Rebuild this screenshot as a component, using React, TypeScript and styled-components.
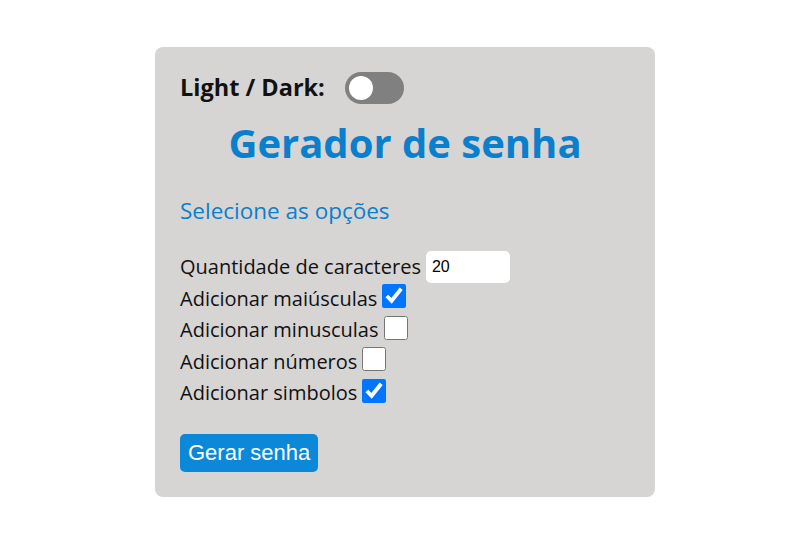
import React, { ChangeEvent, useState } from 'react';
import styled, { createGlobalStyle } from 'styled-components';

const GlobalStyle = createGlobalStyle`
  body {
    margin: 0;
    background-color: #ffffff;
    font-family: 'Open Sans', 'Liberation Sans', sans-serif;
  }
`;

const Page = styled.div`
  display: flex;
  justify-content: center;
  padding: 47px 0 0 9px;
`;

const Card = styled.div`
  width: 500px;
  box-sizing: border-box;
  padding: 25px;
  background-color: #d6d5d4;
  border-radius: 8px;
  color: #111111;
`;

const HeaderRow = styled.div`
  display: flex;
  flex-direction: row;
  align-items: center;
  gap: 20px;
  height: 32px;
`;

const ThemeLabel = styled.span`
  font-size: 23.5px;
  font-weight: 700;
  position: relative;
  top: -1px;
`;

const Switch = styled.button<{ $on: boolean }>`
  position: relative;
  width: 59px;
  height: 32px;
  padding: 0;
  border: none;
  border-radius: 16px;
  background-color: ${(p) => (p.$on ? '#0a88d9' : '#808080')};
  cursor: pointer;

  &::after {
    content: '';
    position: absolute;
    top: 4px;
    left: ${(p) => (p.$on ? '31px' : '4px')};
    width: 24px;
    height: 24px;
    border-radius: 50%;
    background-color: #ffffff;
  }
`;

const Title = styled.h1`
  margin: 12px 0 0;
  text-align: center;
  font-size: 40px;
  font-weight: 700;
  line-height: 53px;
  color: #0a7fcc;
`;

const Subtitle = styled.h2`
  margin: 27px 0 0;
  font-size: 22.5px;
  font-weight: 400;
  line-height: 30px;
  color: #0a7fcc;
`;

const Options = styled.div`
  display: flex;
  flex-direction: column;
  margin-top: 25px;
`;

const OptionRow = styled.label`
  display: flex;
  flex-direction: row;
  align-items: center;
  gap: 5px;
  height: 31.5px;
  font-size: 20px;
`;

const LengthInput = styled.input`
  width: 84px;
  height: 32px;
  box-sizing: border-box;
  padding: 0 6px;
  border: none;
  border-radius: 5px;
  background-color: #ffffff;
  font-family: 'Liberation Sans', Arial, sans-serif;
  font-size: 16px;
  color: #000000;
  outline: none;
`;

const CheckBox = styled.input.attrs({ type: 'checkbox' })`
  width: 24px;
  height: 24px;
  margin: 0;
  accent-color: #0075ff;
  position: relative;
  top: -2px;
`;

const GenerateButton = styled.button`
  margin-top: 25px;
  height: 38px;
  padding: 0 8px;
  border: none;
  border-radius: 5px;
  background-color: #0b88d8;
  color: #ffffff;
  font-family: 'Liberation Sans', Arial, sans-serif;
  font-size: 22px;
  cursor: pointer;
`;

const App: React.FC = () => {
  const [dark, setDark] = useState<boolean>(false);
  const [length, setLength] = useState<string>('20');
  const [upper, setUpper] = useState<boolean>(true);
  const [lower, setLower] = useState<boolean>(false);
  const [numbers, setNumbers] = useState<boolean>(false);
  const [symbols, setSymbols] = useState<boolean>(true);

  const handleLengthChange = (e: ChangeEvent<HTMLInputElement>) => {
    setLength(e.target.value);
  };

  return (
    <>
      <GlobalStyle />
      <Page>
        <Card>
          <HeaderRow>
            <ThemeLabel>Light / Dark:</ThemeLabel>
            <Switch $on={dark} onClick={() => setDark(!dark)} aria-label="Light / Dark" />
          </HeaderRow>
          <Title>Gerador de senha</Title>
          <Subtitle>Selecione as opções</Subtitle>
          <Options>
            <OptionRow>
              Quantidade de caracteres
              <LengthInput value={length} onChange={handleLengthChange} />
            </OptionRow>
            <OptionRow>
              Adicionar maiúsculas
              <CheckBox checked={upper} onChange={() => setUpper(!upper)} />
            </OptionRow>
            <OptionRow>
              Adicionar minusculas
              <CheckBox checked={lower} onChange={() => setLower(!lower)} />
            </OptionRow>
            <OptionRow>
              Adicionar números
              <CheckBox checked={numbers} onChange={() => setNumbers(!numbers)} />
            </OptionRow>
            <OptionRow>
              Adicionar simbolos
              <CheckBox checked={symbols} onChange={() => setSymbols(!symbols)} />
            </OptionRow>
          </Options>
          <GenerateButton>Gerar senha</GenerateButton>
        </Card>
      </Page>
    </>
  );
};

export default App;
